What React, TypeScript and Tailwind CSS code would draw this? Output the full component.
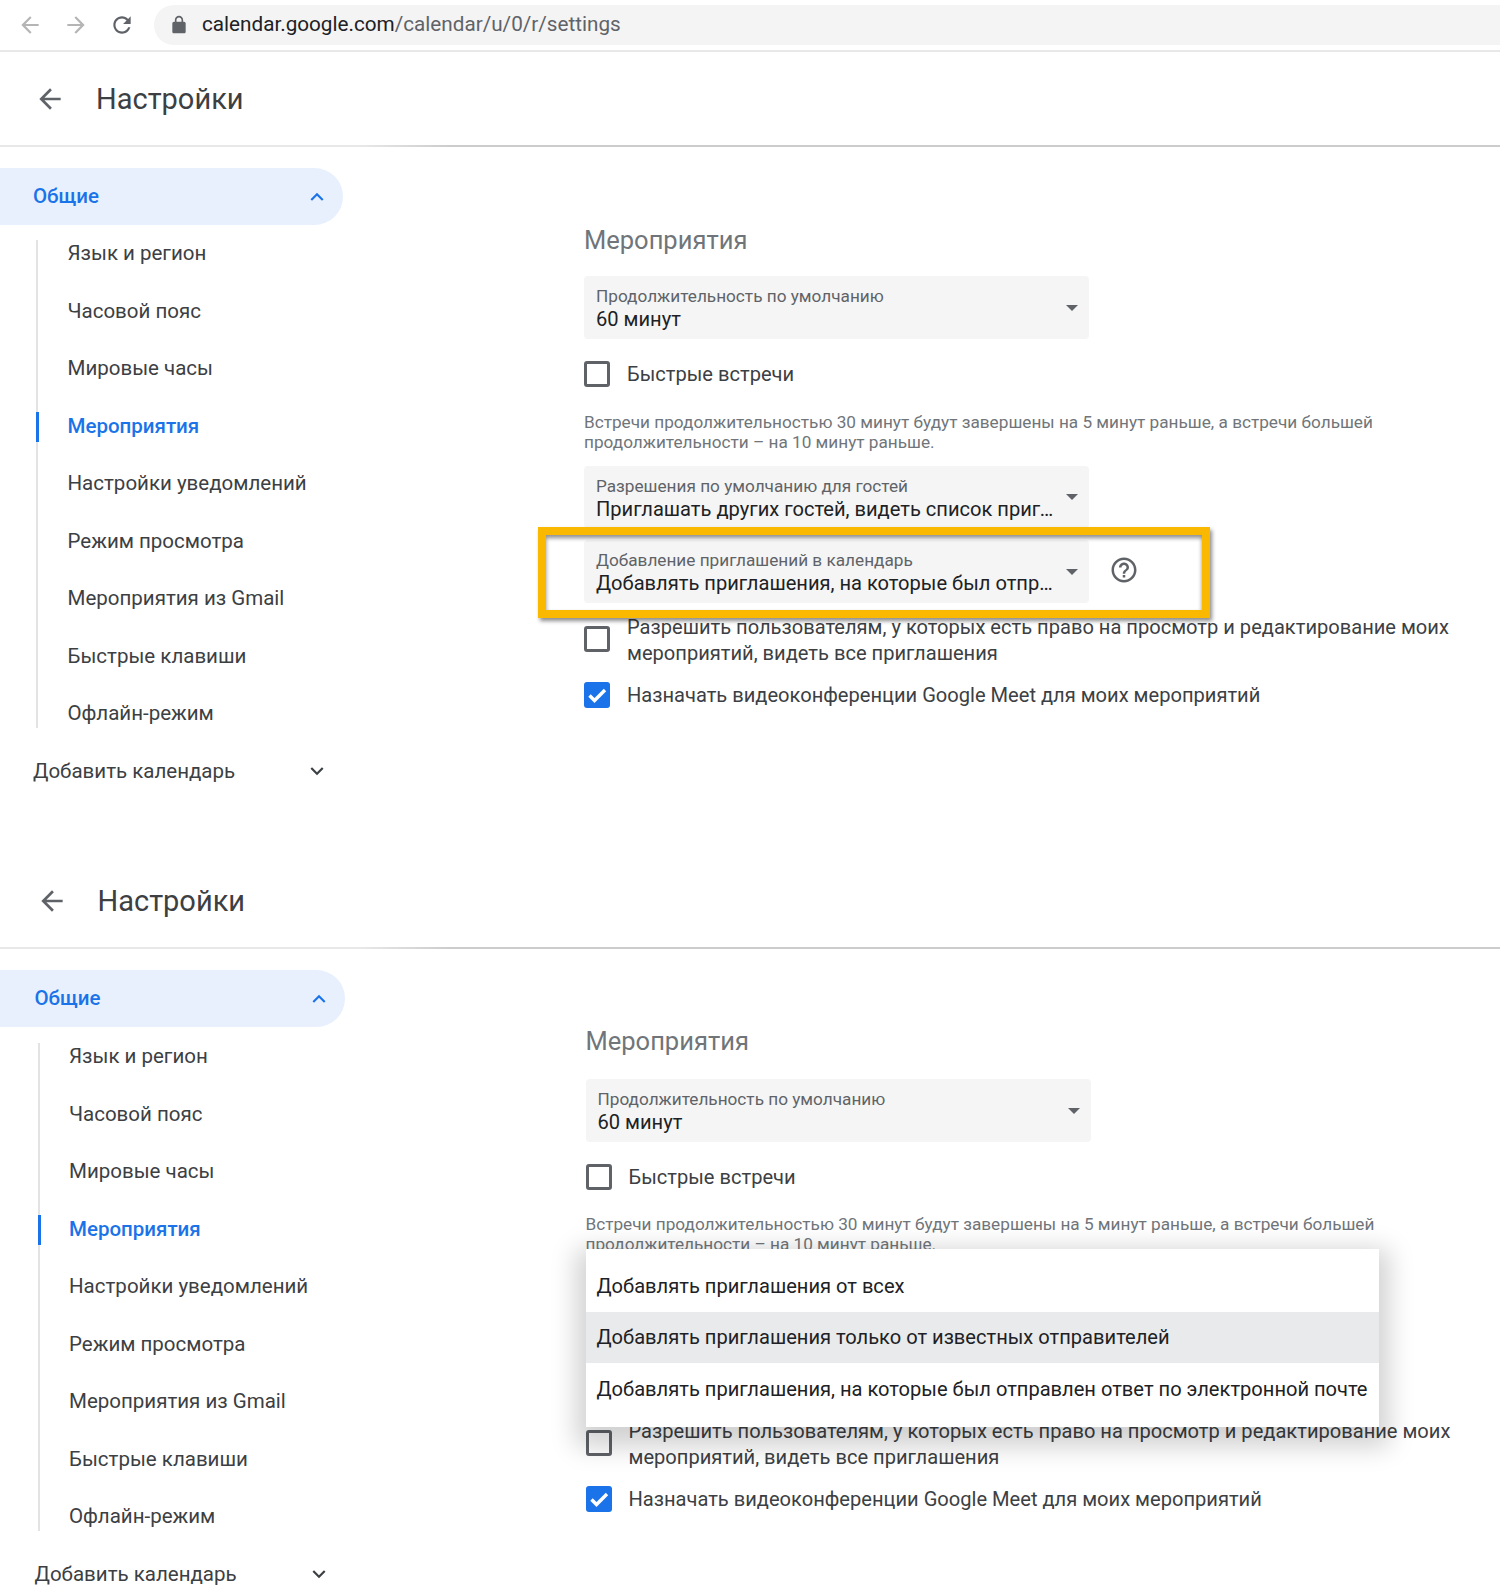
import React from 'react';

const navItems = [
  'Язык и регион',
  'Часовой пояс',
  'Мировые часы',
  'Мероприятия',
  'Настройки уведомлений',
  'Режим просмотра',
  'Мероприятия из Gmail',
  'Быстрые клавиши',
  'Офлайн-режим',
];

const menuOptions = [
  'Добавлять приглашения от всех',
  'Добавлять приглашения только от известных отправителей',
  'Добавлять приглашения, на которые был отправлен ответ по электронной почте',
];

const Icon = ({ d, className }: { d: string; className: string }) => (
  <svg viewBox="0 0 24 24" fill="currentColor" className={className}>
    <path d={d} />
  </svg>
);

const ARROW_BACK = 'M20 11H7.83l5.59-5.59L12 4l-8 8 8 8 1.41-1.41L7.83 13H20v-2z';
const ARROW_FORWARD = 'M12 4l-1.41 1.41L16.17 11H4v2h12.17l-5.58 5.59L12 20l8-8z';
const REFRESH =
  'M17.65 6.35C16.2 4.9 14.21 4 12 4c-4.42 0-7.99 3.58-7.99 8s3.57 8 7.99 8c3.73 0 6.84-2.55 7.73-6h-2.08c-.82 2.33-3.04 4-5.65 4-3.31 0-6-2.69-6-6s2.69-6 6-6c1.66 0 3.14.69 4.22 1.78L13 11h7V4l-2.35 2.35z';
const LOCK =
  'M18 8h-1V6c0-2.76-2.24-5-5-5S7 3.24 7 6v2H6c-1.1 0-2 .9-2 2v10c0 1.1.9 2 2 2h12c1.1 0 2-.9 2-2V10c0-1.1-.9-2-2-2zM9 6c0-1.66 1.34-3 3-3s3 1.34 3 3v2H9V6z';
const CHEVRON_UP = 'M7.41 15.41L12 10.83l4.59 4.58L18 14l-6-6-6 6z';
const CHEVRON_DOWN = 'M7.41 8.59L12 13.17l4.59-4.58L18 10l-6 6-6-6z';
const HELP =
  'M11 18h2v-2h-2v2zm1-16C6.48 2 2 6.48 2 12s4.48 10 10 10 10-4.48 10-10S17.52 2 12 2zm0 18c-4.41 0-8-3.59-8-8s3.59-8 8-8 8 3.59 8 8-3.59 8-8 8zm0-14c-2.21 0-4 1.79-4 4h2c0-1.1.9-2 2-2s2 .9 2 2c0 2-3 1.75-3 5h2c0-2.25 3-2.5 3-5 0-2.21-1.79-4-4-4z';

const Select = ({ label, value, className }: { label: string; value: string; className: string }) => (
  <div className={`flex w-[505px] items-center rounded bg-[#f5f5f5] pl-[12px] pr-[11px] ${className}`}>
    <div className="mt-[2px] min-w-0 flex-1">
      <div className="text-[17.2px] leading-[20px] text-[#5f6368]">{label}</div>
      <div className="mt-[1px] truncate text-[20.1px] leading-[24px] text-[#202124]">{value}</div>
    </div>
    <div className="ml-[10px] h-0 w-0 border-x-[6px] border-t-[6px] border-x-transparent border-t-[#5f6368]" />
  </div>
);

const Checkbox = ({ checked }: { checked?: boolean }) =>
  checked ? (
    <div className="flex h-[26px] w-[26px] shrink-0 items-center justify-center rounded-[3px] bg-[#1a73e8] text-white">
      <svg viewBox="0 0 24 24" fill="none" stroke="currentColor" strokeWidth="3.4" className="h-[24px] w-[24px]">
        <path d="M4.5 12.5l5 5L20 7" />
      </svg>
    </div>
  ) : (
    <div className="h-[26px] w-[26px] shrink-0 rounded-[3px] border-[3px] border-[#5f6368]" />
  );

const SettingsPanel = ({ menuOpen }: { menuOpen?: boolean }) => (
  <section className={`h-[802px] shrink-0 ${menuOpen ? 'pl-[1.5px]' : ''}`}>
    <header className="flex h-[93px] items-center pl-[34px]">
      <Icon d={ARROW_BACK} className="h-[32px] w-[32px] text-[#5f6368]" />
      <h1 className="ml-[30px] translate-y-[1px] text-[29px] leading-none text-[#3c4043]">Настройки</h1>
    </header>
    <div
      className={`h-[2px] bg-gradient-to-r from-[#e8e8e8] from-24% to-[#cccccc] to-30% ${
        menuOpen ? '-ml-[1.5px]' : ''
      }`}
    />

    <div className="flex pt-[21px]">
      <nav className="w-[343px] shrink-0 text-[20.5px] text-[#3c4043]">
        <div
          className={`flex h-[57px] items-center justify-between rounded-r-full bg-[#e8f0fe] pr-[13px] font-medium text-[#1a73e8] ${
            menuOpen ? '-ml-[1.5px] pl-[34.5px]' : 'pl-[33px]'
          }`}
        >
          <span>Общие</span>
          <Icon d={CHEVRON_UP} className="h-[26px] w-[26px]" />
        </div>
        <div
          className={`mb-[14.7px] ml-[36px] flex flex-col border-l-2 border-[#e3e3e3] ${
            menuOpen ? 'mt-[15.7px]' : 'mt-[14.7px]'
          }`}
        >
          <ul className="-my-[14.7px]">
            {navItems.map((item) => (
              <li
                key={item}
                className={`relative flex h-[57.5px] items-center pl-[29.5px] ${
                  item === 'Мероприятия' ? 'font-medium text-[#1a73e8]' : ''
                }`}
              >
                {item === 'Мероприятия' && (
                  <span className="absolute -left-[2px] top-[14px] h-[30px] w-[3px] bg-[#1a73e8]" />
                )}
                {item}
              </li>
            ))}
          </ul>
        </div>
        <div className="flex h-[57px] items-center justify-between pl-[33px] pr-[13px]">
          <span>Добавить календарь</span>
          <Icon d={CHEVRON_DOWN} className="h-[26px] w-[26px]" />
        </div>
      </nav>

      <main className={`ml-[241px] flex-1 ${menuOpen ? 'pt-[53px]' : 'pt-[54px]'}`}>
        <h2 className="text-[25.5px] leading-[36px] text-[#70757a]">Мероприятия</h2>
        <Select
          label="Продолжительность по умолчанию"
          value="60 минут"
          className={`h-[63px] ${menuOpen ? 'mt-[20px]' : 'mt-[18px]'}`}
        />

        <label className="mt-[22px] flex items-center gap-[17px] text-[20.1px] leading-[26px] text-[#3c4043]">
          <Checkbox />
          Быстрые встречи
        </label>

        <p className={`text-[17.2px] leading-[20px] text-[#70757a] ${menuOpen ? 'mt-[24px]' : 'mt-[25px]'}`}>
          Встречи продолжительностью 30 минут будут завершены на 5 минут раньше, а встречи большей
          <br />
          продолжительности – на 10 минут раньше.
        </p>

        <Select
          label="Разрешения по умолчанию для гостей"
          value="Приглашать других гостей, видеть список приглашённых"
          className="mt-[14px] h-[62px]"
        />

        <div className="relative mt-[12px] flex items-center">
          <Select
            label="Добавление приглашений в календарь"
            value="Добавлять приглашения, на которые был отправлен ответ"
            className="h-[63px]"
          />
          <Icon d={HELP} className="ml-[20px] h-[30px] w-[30px] -translate-y-[2px] text-[#5f6368]" />

          {!menuOpen && (
            <div className="absolute -left-[46px] -top-[13px] h-[91px] w-[672px] border-[8px] border-[#fbb800] shadow-[2px_3px_4px_rgba(0,0,0,0.45),inset_0_3px_4px_rgba(0,0,0,0.45)]" />
          )}

          {menuOpen && (
            <ul className="absolute -top-[93px] left-0 z-10 w-[793px] bg-white pb-[12px] pt-[11px] text-[20.1px] text-[#202124] shadow-[0_10px_24px_10px_rgba(0,0,0,0.18)]">
              {menuOptions.map((option, idx) => (
                <li
                  key={option}
                  className={`flex h-[51.5px] items-center whitespace-nowrap pl-[11px] ${
                    idx === 1 ? 'bg-[#e9eaec]' : ''
                  }`}
                >
                  {option}
                </li>
              ))}
            </ul>
          )}
        </div>

        <label
          className={`flex gap-[17px] text-[20.1px] leading-[26px] text-[#3c4043] ${
            menuOpen ? 'mt-[13px]' : 'mt-[11px]'
          }`}
        >
          <div className="mt-[12px]">
            <Checkbox />
          </div>
          <span>
            Разрешить пользователям, у которых есть право на просмотр и редактирование моих
            <br />
            мероприятий, видеть все приглашения
          </span>
        </label>

        <label className="mt-[16px] flex items-center gap-[17px] text-[20.1px] leading-[26px] text-[#3c4043]">
          <Checkbox checked />
          Назначать видеоконференции Google Meet для моих мероприятий
        </label>
      </main>
    </div>
  </section>
);

const App = () => {
  return (
    <div className="flex h-[1586px] w-[1500px] flex-col overflow-hidden bg-white font-['Roboto',sans-serif]">
      <div className="flex h-[52px] shrink-0 items-center border-b-2 border-[#e8e8e8] pl-[17px]">
        <Icon d={ARROW_BACK} className="h-[26px] w-[26px] text-[#b5b5b5]" />
        <Icon d={ARROW_FORWARD} className="ml-[20px] h-[26px] w-[26px] text-[#b5b5b5]" />
        <Icon d={REFRESH} className="ml-[20px] h-[26px] w-[26px] text-[#5f6368]" />
        <div className="ml-[19px] flex h-[40px] flex-1 items-center rounded-l-full bg-[#f4f4f4] pl-[15px]">
          <Icon d={LOCK} className="h-[20px] w-[20px] text-[#5f6368]" />
          <span className="ml-[13px] text-[20.7px] text-[#202124]">
            calendar.google.com<span className="text-[#5f6368]">/calendar/u/0/r/settings</span>
          </span>
        </div>
      </div>
      <SettingsPanel />
      <SettingsPanel menuOpen />
    </div>
  );
};

export default App;
